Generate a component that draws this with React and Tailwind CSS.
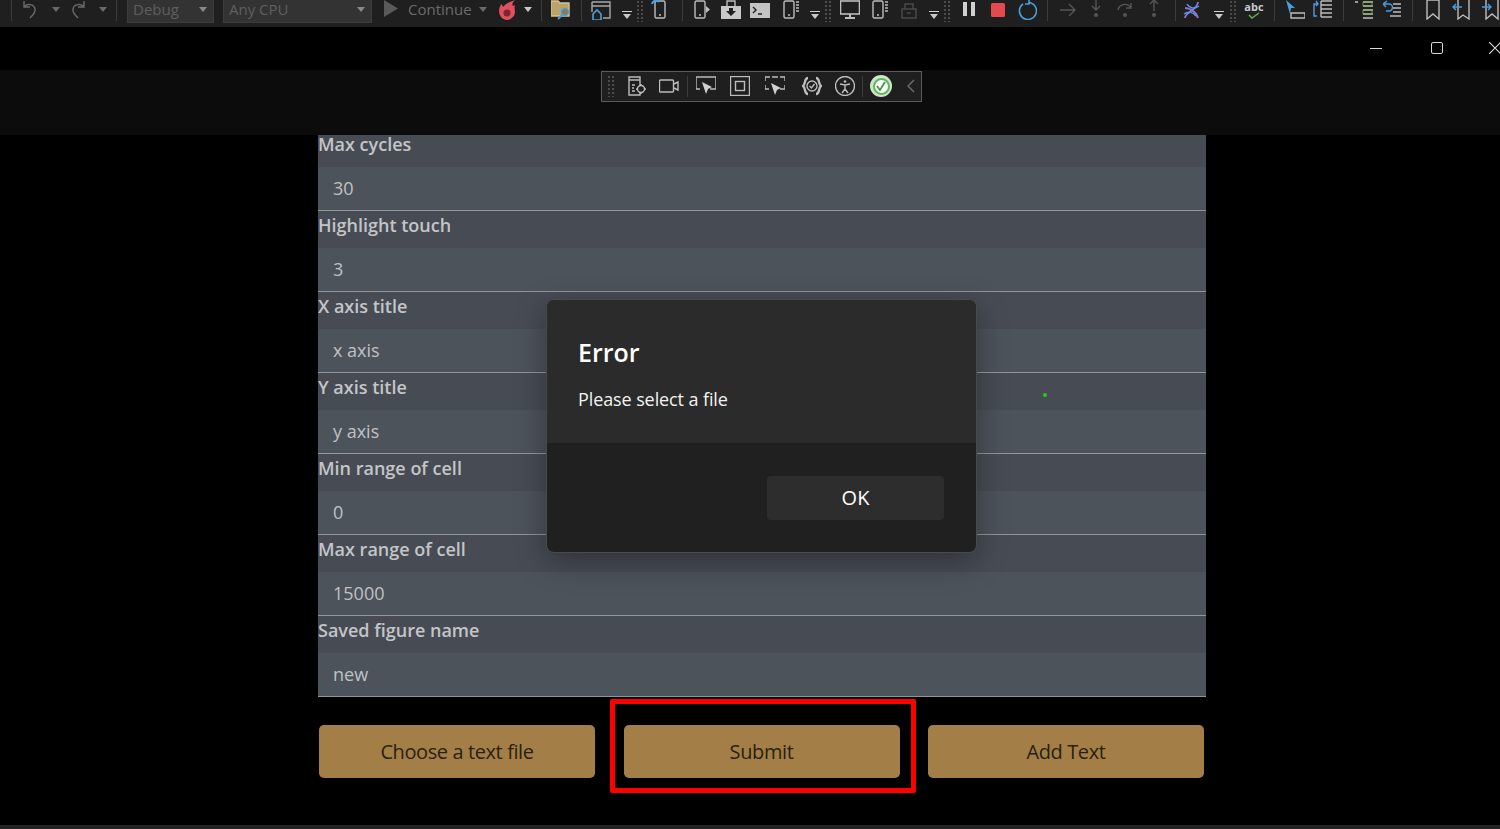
import { useState } from "react";

const fields = [
  ["Max cycles", "30"],
  ["Highlight touch", "3"],
  ["X axis title", "x axis"],
  ["Y axis title", "y axis"],
  ["Min range of cell", "0"],
  ["Max range of cell", "15000"],
  ["Saved figure name", "new"],
];

// toolbar icon, 20px box
function Ico({ className = "", children }) {
  return (
    <svg viewBox="0 0 20 20" fill="none" stroke="#bcbcbc" strokeWidth="1.4" className={"w-5 h-5 shrink-0 " + className}>
      {children}
    </svg>
  );
}

function Sep({ className = "" }) {
  return (
    <span className={"w-2 h-5 shrink-0 flex justify-center " + className}>
      <span className="w-px h-[21px] bg-[#3c3c3c]"></span>
    </span>
  );
}

function Caret({ className = "", dim, bar }) {
  return (
    <span className={"w-2 h-5 shrink-0 relative " + className}>
      {bar && <span className="absolute left-[-1px] top-[11px] w-[10px] h-px bg-[#d0d0d0]"></span>}
      <svg viewBox="0 0 8 5" className={bar ? "absolute left-0 top-[14px] w-2 h-[5px]" : "absolute left-0 top-[7px] w-2 h-[5px]"}>
        <path d="M0 0h8L4 5z" fill={dim ? "#6a6a6a" : "#c8c8c8"} />
      </svg>
    </span>
  );
}

function Dots({ className = "" }) {
  return (
    <span className={"w-2 h-[22px] shrink-0 bg-[radial-gradient(#4c4c4c_1px,transparent_1px)] bg-[length:4px_4px] " + className}></span>
  );
}

function Combo({ label, className }) {
  return (
    <div className={"h-[25px] -mt-[2px] pb-[3px] shrink-0 bg-[#333333] border border-[#3d3d3d] flex items-center justify-between pr-[6px] text-[#5f5f5f] text-[15px] " + className}>
      <span>{label}</span>
      <svg viewBox="0 0 8 5" className="w-2 h-[5px]">
        <path d="M0 0h8L4 5z" fill="#8a8a8a" />
      </svg>
    </div>
  );
}

function Phone({ className = "", children }) {
  return (
    <Ico className={className}>
      <rect x="4" y="1" width="10" height="17" rx="1.5" />
      <path d="M8 15h2" />
      {children}
    </Ico>
  );
}

function TopToolbar() {
  return (
    <div className="h-[27px] shrink-0 bg-[#1f1f1f] flex items-start overflow-hidden">
      <Sep className="ml-[7px]" />
      <Ico className="ml-[5px]"><path d="M4 1v6h6M4 7c3-4 10-3 11 2 .6 4-2 6-5 9" stroke="#6a6a6a" /></Ico>
      <Caret dim className="ml-[12px]" />
      <Ico className="ml-[8px]"><path d="M16 1v6h-6M16 7c-3-4-10-3-11 2-.6 4 2 6 5 9" stroke="#6a6a6a" /></Ico>
      <Caret dim className="ml-[11px]" />
      <Sep className="ml-[5px]" />
      <Combo label="Debug" className="ml-[7px] w-[87px] pl-[5px]" />
      <Combo label="Any CPU" className="ml-[9px] w-[149px] pl-[5px]" />
      <Ico className="ml-[9px]"><path d="M3 0v17l14-8.500z" fill="#5a5a5a" stroke="none" /></Ico>
      <span className="ml-[7px] w-[65px] shrink-0 text-[15px] leading-[19px] text-[#6b6b6b]">Continue</span>
      <Caret dim className="ml-[6px]" />
      <Ico className="ml-[10px]">
        <path d="M2 11C2 8 3 7 4 4c1 1 2 2 2 3C8 4 12 2 18 0c-3 3-3 4-2 6l2-1c-1 3 0 5 0 7 0 4-4 8-8 8s-8-4-8-9z" fill="#e0505f" stroke="none" />
        <circle cx="10" cy="13" r="3.500" fill="#7a2730" stroke="none" />
      </Ico>
      <Caret className="ml-[7px]" />
      <Sep className="ml-[5px]" />
      <Ico className="ml-[6px]">
        <path d="M0 1h7l2 2h9v13H0z" fill="#b9a26c" stroke="#d8c48a" />
        <circle cx="14" cy="12" r="3.500" fill="#8c7a50" stroke="#4a9fe0" />
        <path d="M11.500 14.500 7 19" stroke="#4a9fe0" strokeWidth="1.800" />
      </Ico>
      <Sep className="ml-[6px]" />
      <Ico className="ml-[6px]">
        <path d="M1 2h18v16h-7M1 6h18M1 2v10" stroke="#a8a8a8" />
        <path d="M2 14l4-4 4 4v6H2z" stroke="#4a9fe0" strokeWidth="1.600" />
      </Ico>
      <Caret bar className="ml-[12px]" />
      <Dots className="ml-[5px]" />
      <Phone className="ml-[7px]"><path d="M1 4a4 4 0 0 1 7-2" stroke="#4a9fe0" strokeWidth="2" /></Phone>
      <Sep className="ml-[7px]" />
      <Phone className="ml-[5px]"><path d="M15 6v7l4-3.500z" fill="#bcbcbc" stroke="none" /></Phone>
      <Ico className="ml-[10px]">
        <path d="M0 6h20v13H0z" fill="#c8c8c8" stroke="none" />
        <path d="M6 6V1h8v5" />
        <path d="M8 8h4v3h3l-5 5-5-5h3z" fill="#1f1f1f" stroke="none" />
      </Ico>
      <Ico className="ml-[9px]">
        <rect x="0" y="3" width="20" height="15" fill="#c4c4c4" stroke="none" />
        <path d="M3 7l3 3-3 3M8 14h4" stroke="#1f1f1f" />
      </Ico>
      <Phone className="ml-[10px]"><path d="M16 2h3M16 5h3M16 8h3M16 11h3" /></Phone>
      <Caret bar className="ml-[11px]" />
      <Dots className="ml-[5px]" />
      <Ico className="ml-[8px]">
        <rect x="0.500" y="1" width="19" height="13" strokeWidth="1.600" />
        <path d="M10 14v3M5 18h10" strokeWidth="2" />
      </Ico>
      <Phone className="ml-[9px]"><path d="M16 2h3M16 5h3M16 8h3M16 11h3" /></Phone>
      <Ico className="ml-[10px]"><path d="M3 9h14v9H3zM6 9V4h8v5M8 13h4" stroke="#4a4a4a" /></Ico>
      <Caret bar className="ml-[11px]" />
      <Dots className="ml-[5px]" />
      <Ico className="ml-[8px]"><path d="M4 2h4v14H4zM12 2h4v14h-4z" fill="#d0d0d0" stroke="none" /></Ico>
      <Ico className="ml-[9px]"><rect x="3" y="3" width="14" height="14" rx="1.500" fill="#e5484d" stroke="none" /></Ico>
      <Ico className="ml-[9px]"><path d="M6 4a8.500 8.500 0 1 0 6-1.500M12 0v4H8" stroke="#4a9fe0" strokeWidth="1.600" /></Ico>
      <Sep className="ml-[6px]" />
      <Ico className="ml-[7px]"><path d="M2 10h15M11 4l6 6-6 6" stroke="#555555" /></Ico>
      <Ico className="ml-[8px]">
        <path d="M10 0v10M6 6l4 4 4-4" stroke="#555555" />
        <circle cx="10" cy="15" r="2" fill="#555555" stroke="none" />
      </Ico>
      <Ico className="ml-[9px]">
        <path d="M3 10a7 7 0 0 1 13-2M16 3v5h-5" stroke="#555555" />
        <circle cx="10" cy="15" r="2" fill="#555555" stroke="none" />
      </Ico>
      <Ico className="ml-[9px]">
        <path d="M10 11V1M6 4l4-4 4 4" stroke="#555555" />
        <circle cx="10" cy="15" r="2" fill="#555555" stroke="none" />
      </Ico>
      <Sep className="ml-[7px]" />
      <Ico className="ml-[3px]">
        <path d="M3 18c0-6 13-8 13-16M3 8c4 0 11 3 13 10" stroke="#9a6fd0" strokeWidth="1.800" />
        <path d="M5 4c3 5 8 5 12 2M2 14c4-3 9-2 12 2" stroke="#4a9fe0" />
      </Ico>
      <Caret bar className="ml-[13px]" />
      <Dots className="ml-[6px]" />
      <span className="ml-[7px] w-5 h-5 shrink-0 relative flex justify-center">
        <span className="text-[11px] leading-[13px] font-bold text-[#c8c8c8]">abc</span>
        <svg viewBox="0 0 12 7" className="absolute left-[4px] top-[12px] w-3 h-[7px]">
          <path d="M1 3l3 3 7-5" fill="none" stroke="#63b04f" strokeWidth="1.500" />
        </svg>
      </span>
      <Sep className="ml-[6px]" />
      <Ico className="ml-[7px]">
        <path d="M1 0l9 8H6l-1 6z" fill="#4a9fe0" stroke="none" />
        <path d="M6 13h14v5H6z" />
      </Ico>
      <Ico className="ml-[8px]">
        <path d="M5 4H1v12h3M3 1 5 4 3 6" stroke="#4a9fe0" />
        <path d="M8 1h11M8 5h11M8 9h11M8 13h11M8 17h11M8 1v16" />
      </Ico>
      <Sep className="ml-[6px]" />
      <Ico className="ml-[7px]">
        <path d="M1 2h3M9 2h10M9 6h10M9 10h10M9 14h10M9 18h10" stroke="#c0c0c0" strokeWidth="1.600" />
        <path d="M9 2h9v4H9zM9 10h9v4H9z" stroke="#7fb04f" strokeWidth="0.800" />
      </Ico>
      <Ico className="ml-[8px]">
        <path d="M1 4l3 3M1 4l4-3M1 4h6a3 3 0 0 1 0 7H4" stroke="#4a9fe0" />
        <path d="M11 4h8M11 8h8M11 12h8M8 16h11" />
      </Ico>
      <Sep className="ml-[6px]" />
      <Ico className="ml-[7px]"><path d="M4 0v19l6-5 6 5V0z" /></Ico>
      <Ico className="ml-[9px]">
        <path d="M6 0v19l5-4 6 4V0" />
        <path d="M1 7h9M4 4 1 7l3 3" stroke="#4a9fe0" />
      </Ico>
      <Ico className="ml-[9px]">
        <path d="M5 0v19l6-5 6 5V0" />
        <path d="M1 7h9M7 4l3 3-3 3" stroke="#4a9fe0" />
      </Ico>
    </div>
  );
}

function WindowBar() {
  return (
    <div className="h-[43px] shrink-0 bg-black flex items-center pl-[1370px] pb-[1px] overflow-hidden">
      <span className="w-3 h-px bg-[#d8d8d8] shrink-0"></span>
      <span className="ml-[49px] w-3 h-3 border border-[#d8d8d8] rounded-[2px] shrink-0"></span>
      <svg viewBox="0 0 12 12" className="ml-[46px] w-3 h-3 shrink-0">
        <path d="M0 0l12 12M12 0L0 12" stroke="#d8d8d8" strokeWidth="1.200" />
      </svg>
    </div>
  );
}

function DesignerBar() {
  return (
    <div className="h-[65px] shrink-0 bg-[#0c0c0c] pt-px pl-[601px]">
      <div className="w-[321px] h-[31px] bg-[#1f1f1f] border border-[#5a5a5a] flex items-center pb-[1px]">
        <Dots className="ml-[5px]" />
        <Ico className="ml-[12px]">
          <path d="M2 1h11v18H2zM2 1h11v3H2z" />
          <path d="M5 9h3M5 12h2M5 15h3" />
          <circle cx="14" cy="13" r="3.500" fill="#1f1f1f" />
          <path d="M14 8v2M14 16v2M9 13h2M17 13h2" />
        </Ico>
        <Ico className="ml-[12px]">
          <rect x="0.500" y="4" width="14" height="12" rx="1" />
          <path d="M15 8l4-2v8l-4-2" />
        </Ico>
        <Sep className="ml-[4px]" />
        <Ico className="ml-[5px]">
          <path d="M4 13H0V1h20v12h-6" />
          <path d="M6 6l10 5-4 2-2 5z" fill="#d0d0d0" stroke="none" />
        </Ico>
        <Ico className="ml-[14px]">
          <rect x="0.500" y="0.500" width="19" height="19" />
          <rect x="5.500" y="5.500" width="9" height="9" />
        </Ico>
        <Ico className="ml-[15px]">
          <path d="M0 5V1h5M15 1h5v4M0 9v4h4M20 9v4h-5M7 1h6" />
          <path d="M6 7l10 5-4 2-2 5z" fill="#d0d0d0" stroke="none" />
        </Ico>
        <Ico className="ml-[17px]">
          <path d="M6 2C2 2 4 8 1 10c3 2 1 8 5 8M14 2c4 0 2 6 5 8-3 2-1 8-5 8" strokeWidth="2.400" />
          <circle cx="10" cy="10" r="5" />
          <path d="M7.500 10l2 2 3-4" />
        </Ico>
        <Ico className="ml-[13px]">
          <circle cx="10" cy="10" r="9.500" />
          <circle cx="10" cy="5.500" r="1.300" fill="#bcbcbc" stroke="none" />
          <path d="M5 8l5 1 5-1M10 9v4M10 13l-3 4M10 13l3 4" />
        </Ico>
        <Sep className="ml-[3px]" />
        <span className="ml-[4px] w-[22px] h-[22px] rounded-full bg-[#cfe6c8] flex items-center justify-center shrink-0">
          <span className="w-[17px] h-[17px] rounded-full bg-white border-2 border-[#5cb85c] flex items-center justify-center">
            <svg viewBox="0 0 12 12" className="w-3 h-3">
              <path d="M2 6l3 4 5-8" fill="none" stroke="#3c9a3c" strokeWidth="1.800" />
            </svg>
          </span>
        </span>
        <svg viewBox="0 0 8 14" className="ml-[15px] w-2 h-[14px] shrink-0">
          <path d="M7 1L1 7l6 6" fill="none" stroke="#6a6a6a" strokeWidth="1.500" />
        </svg>
      </div>
    </div>
  );
}

function FieldRow({ label, value }) {
  return (
    <div className="h-[81px] border-b border-[#92969b]">
      <div className="h-[37px] pt-[5px] bg-[#474c54] text-[#c3c5c8] text-[18px] font-semibold leading-[19px]">{label}</div>
      <div className="h-[43px] bg-[#4d535b] pl-[15px] text-[#bfc1c4] text-[18px] leading-[42px]">{value}</div>
    </div>
  );
}

function ErrorDialog() {
  return (
    <div className="absolute left-[546px] top-[299px] w-[431px] h-[254px] rounded-lg overflow-hidden border border-[#4a4a4a] shadow-[0_8px_30px_rgba(0,0,0,0.35)] bg-[#202020] z-10">
      <div className="h-[143px] bg-[#2b2b2b] pl-[31px] pt-[32px]">
        <div className="text-white text-[25px] font-semibold leading-[40px]">Error</div>
        <div className="text-[#f2f2f2] text-[18px] tracking-[-0.1px] leading-[28px] mt-[13px]">Please select a file</div>
      </div>
      <div className="flex justify-end pt-[33px] pr-[32px]">
        <button className="w-[177px] h-[44px] rounded bg-[#2d2d2d] text-white text-[20px]">OK</button>
      </div>
    </div>
  );
}

export default function App() {
  const [buttons] = useState(["Choose a text file", "Submit", "Add Text"]);

  return (
    <div className="relative w-[1500px] h-[829px] overflow-hidden bg-black flex flex-col font-['Open_Sans',sans-serif]">
      <TopToolbar />
      <WindowBar />
      <DesignerBar />

      {/* form panel, scrolled a little so first row is cut */}
      <div className="ml-[318px] w-[888px] h-[562px] shrink-0 overflow-hidden">
        <div className="-mt-[5px]">
          {fields.map((f) => (
            <FieldRow key={f[0]} label={f[0]} value={f[1]} />
          ))}
        </div>
      </div>

      <div className="ml-[319px] mt-[28px] flex gap-[28.500px]">
        {buttons.map((b) => (
          <button key={b} className="w-[276px] h-[53px] pt-[1px] rounded-[5px] bg-[#a37f47] text-[#2a1f10] text-[20px] tracking-[-0.4px]">
            {b}
          </button>
        ))}
      </div>

      <div className="mt-auto h-1 bg-[#222222]"></div>

      <ErrorDialog />

      {/* red marker drawn over the screenshot */}
      <div className="absolute left-[610px] top-[699px] w-[306px] h-[94px] border-[5px] border-[#ff0000] rounded-[2px]"></div>
      <div className="absolute left-[1043px] top-[393px] w-[4px] h-[4px] rounded-full bg-[#22cc22]"></div>
    </div>
  );
}
